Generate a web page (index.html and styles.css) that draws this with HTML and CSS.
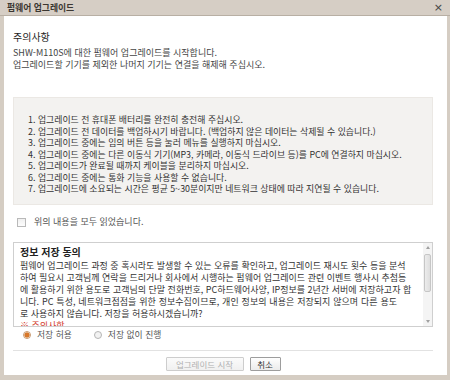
FILE: index.html
```html
<!DOCTYPE html>
<html lang="ko">
<head>
<meta charset="utf-8">
<link rel="stylesheet" href="styles.css">
</head>
<body>
<div class="window">
  <div class="titlebar">
    <span class="title">펌웨어 업그레이드</span>
    <span class="close">×</span>
  </div>
  <div class="panel">
    <h1 class="heading">주의사항</h1>
    <p class="intro">SHW-M110S에 대한 펌웨어 업그레이드를 시작합니다.<br>업그레이드할 기기를 제외한 나머지 기기는 연결을 해제해 주십시오.</p>
    <ol class="notes">
      <li>1. 업그레이드 전 휴대폰 배터리를 완전히 충전해 주십시오.</li>
      <li>2. 업그레이드 전 데이터를 백업하시기 바랍니다. (백업하지 않은 데이터는 삭제될 수 있습니다.)</li>
      <li>3. 업그레이드 중에는 임의 버튼 등을 눌러 메뉴를 실행하지 마십시오.</li>
      <li>4. 업그레이드 중에는 다른 이동식 기기(MP3, 카메라, 이동식 드라이브 등)를 PC에 연결하지 마십시오.</li>
      <li>5. 업그레이드가 완료될 때까지 케이블을 분리하지 마십시오.</li>
      <li>6. 업그레이드 중에는 통화 기능을 사용할 수 없습니다.</li>
      <li>7. 업그레이드에 소요되는 시간은 평균 5~30분이지만 네트워크 상태에 따라 지연될 수 있습니다.</li>
    </ol>
    <label class="check"><span class="checkbox"></span>위의 내용을 모두 읽었습니다.</label>
    <div class="info">
      <div class="info-body">
        <div class="info-title">정보 저장 동의</div>
        <div class="info-text">
          <div class="line">펌웨어 업그레이드 과정 중 혹시라도 발생할 수 있는 오류를 확인하고, 업그레이드 재시도 횟수 등을 분석</div>
          <div class="line">하여 필요시 고객님께 연락을 드리거나 회사에서 시행하는 펌웨어 업그레이드 관련 이벤트 행사시 추첨등</div>
          <div class="line">에 활용하기 위한 용도로 고객님의 단말 전화번호, PC하드웨어사양, IP정보를 2년간 서버에 저장하고자 합</div>
          <div class="line">니다. PC 특성, 네트워크접점을 위한 정보수집이므로, 개인 정보의 내용은 저장되지 않으며 다른 용도</div>
          <div class="line last">로 사용하지 않습니다. 저장을 허용하시겠습니까?</div>
          <div class="line last warn">※ 주의사항</div>
        </div>
      </div>
      <div class="scrollbar">
        <span class="arrow up"></span>
        <span class="track"><span class="thumb"></span></span>
        <span class="arrow down"></span>
      </div>
    </div>
    <div class="radios">
      <label class="radio"><span class="dot on"></span>저장 허용</label>
      <label class="radio"><span class="dot"></span>저장 없이 진행</label>
    </div>
    <div class="footer">
      <button class="btn btn-start" disabled>업그레이드 시작</button>
      <button class="btn btn-cancel">취소</button>
    </div>
  </div>
</div>
</body>
</html>
```

FILE: styles.css
```css
* { box-sizing: border-box; }
html, body {
  margin: 0;
  padding: 0;
  width: 450px;
  height: 380px;
  overflow: hidden;
  background: #d5cdc3;
  font-family: "Noto Sans CJK KR", "Noto Sans", sans-serif;
  color: #3a3a3a;
}
.window {
  width: 450px;
  height: 380px;
  display: flex;
  flex-direction: column;
  padding: 0 3px 5px 4px;
}
.titlebar {
  height: 16px;
  flex: none;
  display: flex;
  align-items: center;
  justify-content: space-between;
  border-bottom: 1px solid #b8afa4;
  margin: 0 -3px 0 -4px;
  padding: 0 7px;
  background: #d6cec5;
}
.title {
  font-size: 8.8px;
  font-weight: bold;
  color: #3b3631;
  line-height: 12px;
}
.close {
  font-family: "DejaVu Sans", sans-serif;
  font-size: 11px;
  color: #444;
  line-height: 12px;
}
.panel {
  flex: 1;
  background: #fff;
  padding: 14px 14px 0 9px;
  display: flex;
  flex-direction: column;
}
.heading {
  margin: 0;
  font-size: 10px;
  line-height: 14px;
  font-weight: normal;
  color: #1e1e1e;
}
.intro {
  margin: 3px 0 0;
  font-size: 9px;
  line-height: 12px;
  color: #444;
}
.notes {
  list-style: none;
  margin: 26px 0 0;
  padding: 16px 10px 12px 14px;
  background: #f3f2f0;
  border: 1px solid #ebe8e4;
  height: 108px;
  font-size: 8.9px;
  line-height: 11.5px;
  color: #333;
  white-space: nowrap;
}
.check {
  display: flex;
  align-items: center;
  gap: 8px;
  margin: 11px 0 0 4px;
  font-size: 9px;
  line-height: 12px;
  color: #555;
}
.checkbox {
  width: 9px;
  height: 9px;
  border: 1px solid #b9b9b9;
  background: linear-gradient(#f0f0f0, #fdfdfd);
}
.info {
  margin-top: 14px;
  height: 85px;
  border: 1px solid #cfcfcf;
  display: flex;
  overflow: hidden;
}
.info-body {
  flex: 1;
  padding: 3px 0 0 6px;
  overflow: hidden;
}
.info-title {
  font-size: 10px;
  font-weight: bold;
  line-height: 12px;
  color: #222;
}
.info-text {
  margin-top: 2px;
  width: 377px;
  font-size: 9px;
  line-height: 12px;
  color: #333;
}
.line {
  white-space: nowrap;
  text-align: justify;
  text-align-last: justify;
}
.line.last {
  text-align-last: left;
}
.warn {
  color: #d23a2a;
}
.scrollbar {
  width: 9px;
  flex: none;
  background: #f4f4f4;
  display: flex;
  flex-direction: column;
  align-items: center;
  padding: 3px 0;
}
.arrow {
  width: 0;
  height: 0;
  border-left: 2.5px solid transparent;
  border-right: 2.5px solid transparent;
  flex: none;
}
.arrow.up { border-bottom: 3px solid #a0a0a0; }
.arrow.down { border-top: 3px solid #a0a0a0; }
.track {
  flex: 1;
  width: 100%;
  padding: 5px 1px;
  display: flex;
}
.thumb {
  width: 100%;
  height: 38px;
  border: 1px solid #c6c6c6;
  border-radius: 2px;
  background: linear-gradient(90deg, #ececec, #dedede);
}
.radios {
  display: flex;
  gap: 22px;
  margin: 2px 0 0 10px;
  height: 12px;
}
.radio {
  display: flex;
  align-items: center;
  gap: 6px;
  font-size: 8.8px;
  line-height: 12px;
  color: #555;
}
.dot {
  width: 8px;
  height: 8px;
  border-radius: 50%;
  border: 1px solid #b5b5b5;
  background: #f2f2f2;
}
.dot.on {
  background: radial-gradient(circle, #d8782a 0 2.3px, #f6e6d6 2.8px);
  border-color: #c89a70;
}
.footer {
  margin-top: 9px;
  border-top: 1px solid #e2e2e2;
  display: flex;
  justify-content: center;
  gap: 6px;
  padding-top: 6px;
}
.btn {
  height: 14px;
  padding: 0;
  font-family: "Noto Sans CJK KR", "Noto Sans", sans-serif;
  font-size: 8.5px;
  line-height: 12px;
  border: 1px solid #9d9d9d;
  border-radius: 1px;
  background: linear-gradient(#fefefe, #ebebeb);
  color: #333;
  text-align: center;
  white-space: nowrap;
}
.btn-start {
  width: 78px;
}
.btn-cancel {
  width: 31px;
}
.btn:disabled {
  color: #b0b0b0;
  border-color: #cdcdcd;
  background: linear-gradient(#fbfbfb, #f0f0f0);
}
```
